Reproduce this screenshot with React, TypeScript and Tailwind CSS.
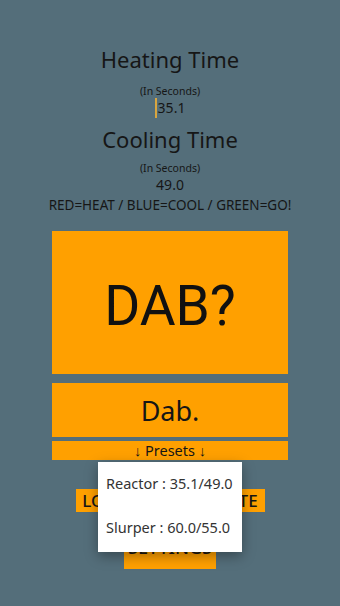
import React from "react";

export default function App() {
  return (
    <div className="relative w-full min-h-[606px] bg-[#546e7a] flex flex-col items-center pt-[45px] font-['Noto_Sans',sans-serif] text-[#161616]">
      <div className="h-[28px] leading-[28px] text-[22px]">Heating Time</div>
      <div className="mt-[11px] h-[14px] leading-[14px] text-[10.5px]">(In Seconds)</div>
      <div className="h-[20px] leading-[20px] text-[14px] flex items-center">
        <span className="w-[2px] h-[20px] bg-[#d9a640] mr-[1px]" />
        <span>35.1</span>
      </div>
      <div className="mt-[7px] h-[28px] leading-[28px] text-[22px]">Cooling Time</div>
      <div className="mt-[8px] h-[14px] leading-[14px] text-[10.5px]">(In Seconds)</div>
      <div className="h-[20px] leading-[20px] text-[14px]">49.0</div>
      <div className="mt-[2px] h-[16px] leading-[16px] text-[13.5px] whitespace-nowrap">RED=HEAT / BLUE=COOL / GREEN=GO!</div>

      <div className="mt-[18px] w-[236px] h-[143px] bg-[#ffa000] flex items-center justify-center pt-[8px]">
        <span className="font-['Roboto',sans-serif] text-[55px] leading-none text-[#111]">DAB?</span>
      </div>
      <div className="mt-[9px] w-[236px] h-[54px] bg-[#ffa000] flex items-center justify-center">
        <span className="text-[27px] leading-none">Dab.</span>
      </div>
      <div className="mt-[4px] w-[236px] h-[19px] bg-[#ffa000] flex items-center justify-center">
        <span className="text-[14.5px] leading-none">↓ Presets ↓</span>
      </div>
      <div className="mt-[29px] w-[189px] h-[23px] bg-[#ffa000] flex items-center justify-center">
        <span className="text-[17px] leading-none font-medium whitespace-nowrap">LOAD / SAVE / DELETE</span>
      </div>
      <div className="mt-[18px] w-[92px] h-[39px] bg-[#ffa000] flex items-center justify-center pb-[5px]">
        <span className="text-[18px] leading-none font-medium">SETTINGS</span>
      </div>

      <div className="absolute left-[98px] top-[462px] w-[144px] h-[90px] bg-white shadow-[0_4px_12px_rgba(0,0,0,0.35)] flex flex-col text-[#333] text-[14.5px]">
        <div className="h-[44px] flex items-center pl-[8px] whitespace-nowrap">Reactor : 35.1/49.0</div>
        <div className="h-[44px] flex items-center pl-[8px] whitespace-nowrap">Slurper : 60.0/55.0</div>
      </div>
    </div>
  );
}
